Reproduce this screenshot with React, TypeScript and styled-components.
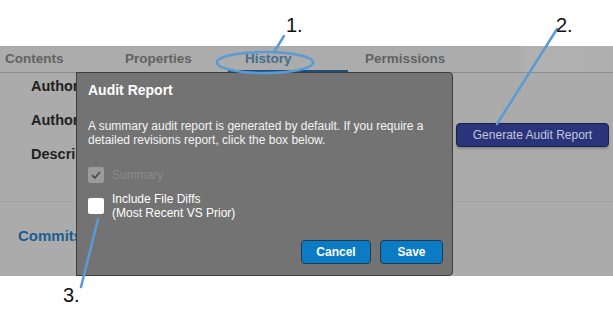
import React from 'react'
import styled, { createGlobalStyle } from 'styled-components'

const GlobalStyle = createGlobalStyle`
    html, body {
        margin: 0;
        padding: 0;
        background: #ffffff;
        font-family: 'Liberation Sans', Arial, sans-serif;
    }
`

const Page = styled.div`
    position: relative;
    width: 613px;
    height: 310px;
    background: #ffffff;
    overflow: hidden;
`

const TopGap = styled.div`
    height: 46px;
`

const Panel = styled.section`
    position: relative;
    height: 230px;
    background: #ababab;
`

const TabBar = styled.nav`
    display: flex;
    height: 26px;
    border-bottom: 1px solid #8d8d8d;
    background: linear-gradient(to right, #acacac 0%, #acacac 85%, #b1b1b1 86%, #afafaf 100%);
`

const Tab = styled.div<{ $active?: boolean }>`
    position: relative;
    width: 120px;
    padding-left: 5px;
    box-sizing: border-box;
    font-size: 13.5px;
    font-weight: 700;
    line-height: 26px;
    color: ${(p) => (p.$active ? '#466d8d' : '#626262')};

    &::after {
        content: '';
        display: ${(p) => (p.$active ? 'block' : 'none')};
        position: absolute;
        left: -12px;
        bottom: -1px;
        width: 120px;
        height: 3px;
        background: #1c4f7c;
    }
`

const TopSection = styled.div`
    display: flex;
    justify-content: space-between;
    padding: 4px 4px 0 31px;
`

const Fields = styled.div`
    display: grid;
    grid-auto-rows: 18px;
    row-gap: 16px;
`

const FieldLabel = styled.div`
    font-size: 14.5px;
    font-weight: 700;
    line-height: 18px;
    color: #1f1f1f;
`

const ActionColumn = styled.div`
    padding-top: 46px;
`

const GenerateButton = styled.button`
    width: 153px;
    height: 24px;
    padding: 0;
    border: 1px solid #1b2048;
    border-radius: 4px;
    background: #29347a;
    color: #c3c6dc;
    font-family: 'Liberation Sans', Arial, sans-serif;
    font-size: 12px;
    box-shadow: 0 2px 2px rgba(0, 0, 0, 0.2);
`

const Separator = styled.hr`
    margin: 38px 0 0 0;
    border: none;
    height: 1px;
    background: #a1a1a1;
`

const CommitTitle = styled.div`
    margin-top: 25px;
    padding-left: 18px;
    font-size: 15px;
    font-weight: 700;
    line-height: 18px;
    color: #1b5e93;
`

const Dialog = styled.div`
    position: absolute;
    left: 76px;
    top: 26px;
    width: 377px;
    height: 204px;
    box-sizing: border-box;
    display: flex;
    flex-direction: column;
    padding: 8px 9px 0 11px;
    background: #737373;
    border: 1px solid #3d3d3d;
    border-radius: 0 4px 4px 0;
    color: #ffffff;
`

const DialogTitle = styled.h2`
    margin: 0;
    font-size: 14px;
    font-weight: 700;
    line-height: 18px;
`

const DialogText = styled.p`
    margin: 20px 0 0 0;
    font-size: 12px;
    line-height: 14px;
    color: #f4f4f4;
`

const OptionRow = styled.label<{ $gap: number }>`
    display: flex;
    align-items: center;
    gap: 8px;
    margin-top: ${(p) => p.$gap}px;
    font-size: 12px;
    line-height: 14px;
`

const Box = styled.span<{ $disabled?: boolean }>`
    display: flex;
    align-items: center;
    justify-content: center;
    flex: none;
    width: 16px;
    height: 16px;
    border-radius: 2px;
    background: ${(p) => (p.$disabled ? '#9b9b9b' : '#ffffff')};
`

const OptionText = styled.span<{ $disabled?: boolean }>`
    color: ${(p) => (p.$disabled ? '#8b8b8b' : '#ffffff')};
`

const ButtonRow = styled.div`
    display: flex;
    justify-content: flex-end;
    gap: 9px;
    margin-top: 20px;
`

const DialogButton = styled.button<{ $width: number }>`
    width: ${(p) => p.$width}px;
    height: 24px;
    padding: 0;
    border: 1px solid #1d3a57;
    border-radius: 4px;
    background: #0b7bc3;
    color: #ffffff;
    font-family: 'Liberation Sans', Arial, sans-serif;
    font-size: 12px;
    font-weight: 700;
`

const Annotations = styled.svg`
    position: absolute;
    left: 0;
    top: 0;
    pointer-events: none;
`

const Callout = styled.span<{ $x: number; $y: number }>`
    position: absolute;
    left: ${(p) => p.$x}px;
    top: ${(p) => p.$y}px;
    font-family: 'Liberation Sans', Arial, sans-serif;
    font-size: 20px;
    line-height: 20px;
    color: #111111;
`

const CheckMark = () => (
    <svg width="12" height="12" viewBox="0 0 12 12">
        <path d="M2 6.2 L4.8 9 L10 3" fill="none" stroke="#4e4e4e" strokeWidth="1.8" />
    </svg>
)

export default function App() {
    return (
        <>
            <GlobalStyle />
            <Page>
                <TopGap />
                <Panel>
                    <TabBar>
                        <Tab>Contents</Tab>
                        <Tab>Properties</Tab>
                        <Tab $active>History</Tab>
                        <Tab>Permissions</Tab>
                    </TabBar>
                    <TopSection>
                        <Fields>
                            <FieldLabel>Author</FieldLabel>
                            <FieldLabel>Author</FieldLabel>
                            <FieldLabel>Description</FieldLabel>
                        </Fields>
                        <ActionColumn>
                            <GenerateButton>Generate Audit Report</GenerateButton>
                        </ActionColumn>
                    </TopSection>
                    <Separator />
                    <CommitTitle>Commits</CommitTitle>

                    <Dialog>
                        <DialogTitle>Audit Report</DialogTitle>
                        <DialogText>
                            A summary audit report is generated by default. If you require a
                            <br />
                            detailed revisions report, click the box below.
                        </DialogText>
                        <OptionRow $gap={20}>
                            <Box $disabled>
                                <CheckMark />
                            </Box>
                            <OptionText $disabled>Summary</OptionText>
                        </OptionRow>
                        <OptionRow $gap={9}>
                            <Box />
                            <OptionText>
                                Include File Diffs
                                <br />
                                (Most Recent VS Prior)
                            </OptionText>
                        </OptionRow>
                        <ButtonRow>
                            <DialogButton $width={70}>Cancel</DialogButton>
                            <DialogButton $width={63}>Save</DialogButton>
                        </ButtonRow>
                    </Dialog>
                </Panel>

                <Annotations width="613" height="310" viewBox="0 0 613 310">
                    <g fill="none" stroke="#5b9bd5" strokeWidth="2.5" strokeLinecap="round">
                        <ellipse cx="265" cy="62.5" rx="48" ry="10.5" />
                        <line x1="284" y1="36" x2="274" y2="52" />
                        <line x1="557" y1="29" x2="497" y2="124" />
                        <line x1="98" y1="219" x2="81" y2="287" />
                    </g>
                </Annotations>
                <Callout $x={286} $y={15}>1.</Callout>
                <Callout $x={556} $y={15}>2.</Callout>
                <Callout $x={63} $y={285}>3.</Callout>
            </Page>
        </>
    )
}
